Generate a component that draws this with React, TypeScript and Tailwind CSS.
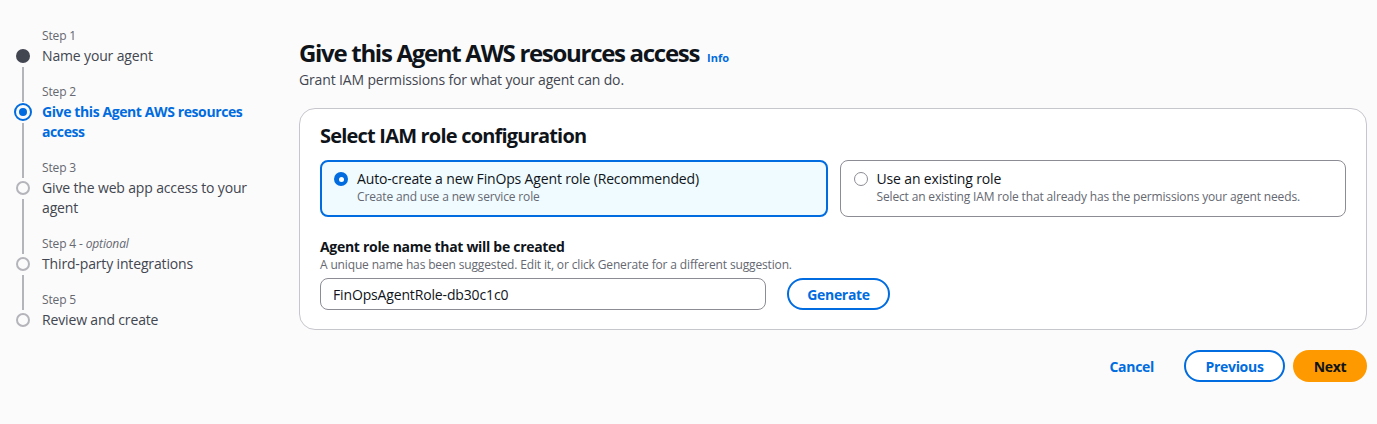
import { useState } from 'react';

type Step = {
    label: string;
    optional?: boolean;
    name: string;
    state: 'done' | 'active' | 'todo';
};

const steps: Step[] = [
    { label: 'Step 1', name: 'Name your agent', state: 'done' },
    { label: 'Step 2', name: 'Give this Agent AWS resources access', state: 'active' },
    { label: 'Step 3', name: 'Give the web app access to your agent', state: 'todo' },
    { label: 'Step 4', optional: true, name: 'Third-party integrations', state: 'todo' },
    { label: 'Step 5', name: 'Review and create', state: 'todo' },
];

const StepDot = ({ state }: { state: Step['state'] }) => {
    if (state === 'done') return <span className="block w-[14px] h-[14px] rounded-full bg-[#424650]" />;
    if (state === 'active')
        return (
            <span className="flex items-center justify-center w-[18px] h-[18px] rounded-full border-2 border-[#006ce0] shrink-0">
                <span className="block w-[8px] h-[8px] rounded-full bg-[#006ce0]" />
            </span>
        );
    return <span className="block w-[14px] h-[14px] rounded-full border-2 border-[#b4b4bb]" />;
};

const Radio = ({ checked }: { checked: boolean }) =>
    checked ? (
        <span className="flex items-center justify-center w-[14px] h-[14px] rounded-full bg-[#006ce0] shrink-0">
            <span className="block w-[5px] h-[5px] rounded-full bg-white" />
        </span>
    ) : (
        <span className="block w-[14px] h-[14px] rounded-full border border-[#8c8c94] bg-white shrink-0" />
    );

const App = () => {
    const [mode, setMode] = useState<'auto' | 'existing'>('auto');
    const [roleName, setRoleName] = useState('FinOpsAgentRole-db30c1c0');

    const tile = (id: 'auto' | 'existing', title: string, desc: string) => {
        const on = mode === id;
        return (
            <button
                type="button"
                onClick={() => setMode(id)}
                className={`flex-1 flex items-start gap-[9px] text-left rounded-[8px] h-[57px] ${
                    on ? 'border-2 border-[#006ce0] bg-[#f0fbff] pl-[12px] pt-[7px]' : 'border border-[#8c8c94] bg-white pl-[13px] pt-[8px]'
                }`}
            >
                <span className="mt-[3px]">
                    <Radio checked={on} />
                </span>
                <span className="flex flex-col">
                    <span className="text-[14px] leading-[20px] text-[#0f141a]">{title}</span>
                    <span className="text-[12px] leading-[16px] text-[#656871]">{desc}</span>
                </span>
            </button>
        );
    };

    return (
        <div className="min-h-screen bg-[#fbfbfb] flex pl-[16px] pr-[10px] pt-[28px] font-['Open_Sans',sans-serif] tracking-[-0.15px] antialiased">
            <nav className="w-[283px] shrink-0 flex flex-col">
                {steps.map((s, i) => {
                    const last = i === steps.length - 1;
                    return (
                        <div key={s.label} className="flex gap-[12px]">
                            <div className="w-[14px] flex flex-col items-center">
                                <div className="h-[18px] w-[2px] flex flex-col">
                                    {i > 0 && <span className="flex-1 bg-[#b4b4bb]" />}
                                </div>
                                <div className="h-[20px] flex items-center justify-center">
                                    <StepDot state={s.state} />
                                </div>
                                {!last && <span className="flex-1 w-[2px] bg-[#b4b4bb] mt-[1px]" />}
                            </div>
                            <div className={`flex flex-col w-[215px] ${last ? '' : 'pb-[18px]'}`}>
                                <div className="text-[12px] leading-[16px] text-[#656871] mb-[2px]">
                                    {s.label}
                                    {s.optional && (
                                        <>
                                            {' - '}
                                            <i>optional</i>
                                        </>
                                    )}
                                </div>
                                <div
                                    className={`text-[14px] leading-[20px] ${
                                        s.state === 'active'
                                            ? 'text-[#006ce0] font-bold tracking-[-0.4px]'
                                            : 'text-[#424650]'
                                    }`}
                                >
                                    {s.name}
                                </div>
                            </div>
                        </div>
                    );
                })}
            </nav>

            <main className="flex-1 min-w-0 flex flex-col">
                <div className="flex items-baseline gap-[8px] mt-[10px]">
                    <h1 className="text-[24px] leading-[30px] font-bold text-[#0f141a] tracking-[-1.3px]">
                        Give this Agent AWS resources access
                    </h1>
                    <a className="text-[11px] font-bold text-[#006ce0] tracking-normal">Info</a>
                </div>
                <p className="text-[14px] leading-[20px] text-[#424650] mt-[2px]">
                    Grant IAM permissions for what your agent can do.
                </p>

                <section className="mt-[18px] bg-white border border-[#c6c6cd] rounded-[16px] px-[20px] pt-[15px] pb-[19px]">
                    <h2 className="text-[20px] leading-[24px] font-bold text-[#0f141a] tracking-[-0.8px]">
                        Select IAM role configuration
                    </h2>
                    <div className="flex gap-[12px] mt-[12px]">
                        {tile('auto', 'Auto-create a new FinOps Agent role (Recommended)', 'Create and use a new service role')}
                        {tile(
                            'existing',
                            'Use an existing role',
                            'Select an existing IAM role that already has the permissions your agent needs.'
                        )}
                    </div>

                    <div className="mt-[20px]">
                        <label htmlFor="role" className="block text-[14px] leading-[20px] font-bold text-[#0f141a] tracking-[-0.3px]">
                            Agent role name that will be created
                        </label>
                        <p className="text-[12px] leading-[16px] text-[#656871]">
                            A unique name has been suggested. Edit it, or click Generate for a different suggestion.
                        </p>
                        <div className="flex items-center gap-[21px] mt-[5px]">
                            <input
                                id="role"
                                value={roleName}
                                onChange={(e) => setRoleName(e.target.value)}
                                className="w-[446px] h-[32px] rounded-[8px] border border-[#8c8c94] bg-white px-[12px] text-[14px] text-[#0f141a] outline-none"
                            />
                            <button
                                type="button"
                                className="h-[32px] w-[103px] rounded-full border-2 border-[#006ce0] text-[14px] font-bold text-[#006ce0] bg-white tracking-[-0.3px]"
                            >
                                Generate
                            </button>
                        </div>
                    </div>
                </section>

                <div className="flex justify-end items-center mt-[20px]">
                    <button type="button" className="h-[32px] px-[20px] text-[14px] font-bold text-[#006ce0] tracking-[-0.3px]">
                        Cancel
                    </button>
                    <button
                        type="button"
                        className="ml-[10px] h-[32px] w-[101px] rounded-full border-2 border-[#006ce0] text-[14px] font-bold text-[#006ce0] bg-white tracking-[-0.3px]"
                    >
                        Previous
                    </button>
                    <button
                        type="button"
                        className="ml-[8px] h-[32px] w-[74px] rounded-full bg-[#ff9900] text-[14px] font-bold text-[#0f141a] tracking-[-0.3px]"
                    >
                        Next
                    </button>
                </div>
            </main>
        </div>
    );
};

export default App;
